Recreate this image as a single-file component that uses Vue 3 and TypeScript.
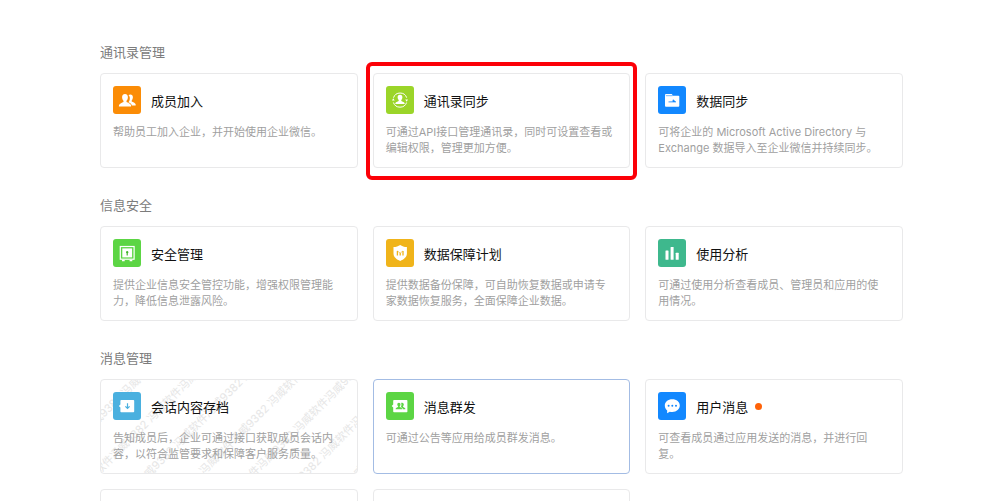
<script setup lang="ts">
type IconName = 'members' | 'contacts' | 'folder' | 'safe' | 'shield' | 'chart' | 'archive' | 'broadcast' | 'chat'

interface Card {
  title: string
  icon: IconName
  color: string
  text: string
  marked?: boolean
  active?: boolean
  dot?: boolean
  watermark?: boolean
}

interface Section {
  name: string
  cards: Card[]
  pending: number
}

const sections: Section[] = [
  {
    name: '通讯录管理',
    pending: 0,
    cards: [
      { title: '成员加入', icon: 'members', color: '#fb8c06', text: '帮助员工加入企业，并开始使用企业微信。' },
      { title: '通讯录同步', icon: 'contacts', color: '#9bd529', text: '可通过API接口管理通讯录，同时可设置查看或\n编辑权限，管理更加方便。', marked: true },
      { title: '数据同步', icon: 'folder', color: '#1288ff', text: '可将企业的 Microsoft Active Directory 与\nExchange 数据导入至企业微信并持续同步。' },
    ],
  },
  {
    name: '信息安全',
    pending: 0,
    cards: [
      { title: '安全管理', icon: 'safe', color: '#5cd544', text: '提供企业信息安全管控功能，增强权限管理能\n力，降低信息泄露风险。' },
      { title: '数据保障计划', icon: 'shield', color: '#f0b41a', text: '提供数据备份保障，可自助恢复数据或申请专\n家数据恢复服务，全面保障企业数据。' },
      { title: '使用分析', icon: 'chart', color: '#3eb88d', text: '可通过使用分析查看成员、管理员和应用的使\n用情况。' },
    ],
  },
  {
    name: '消息管理',
    pending: 2,
    cards: [
      { title: '会话内容存档', icon: 'archive', color: '#4ab0df', text: '告知成员后，企业可通过接口获取成员会话内\n容，以符合监管要求和保障客户服务质量。', watermark: true },
      { title: '消息群发', icon: 'broadcast', color: '#5cd544', text: '可通过公告等应用给成员群发消息。', active: true },
      { title: '用户消息', icon: 'chat', color: '#1288ff', text: '可查看成员通过应用发送的消息，并进行回\n复。', dot: true },
    ],
  },
]

const watermarkText = '冯威软件冯威9382 '.repeat(6)
const watermarkRows = Array.from({ length: 7 }, (_, i) => 29 + i * 37)
</script>

<template>
  <main class="page">
    <section v-for="section in sections" :key="section.name" class="section">
      <h2 class="heading">{{ section.name }}</h2>
      <div class="grid">
        <a
          v-for="card in section.cards"
          :key="card.title"
          href="#"
          class="card"
          :class="{ active: card.active }"
        >
          <svg v-if="card.watermark" class="watermark" aria-hidden="true">
            <g transform="rotate(-45)">
              <text v-for="y in watermarkRows" :key="y" x="-187" :y="y" xml:space="preserve">{{ watermarkText }}</text>
            </g>
          </svg>
          <span class="top">
            <svg class="icon" viewBox="0 0 28 28" aria-hidden="true">
              <rect width="28" height="28" rx="3" :fill="card.color" />
              <g v-if="card.icon === 'members'" fill="#fff">
                <path d="M15.5 9.2c.6-.5 1.1-.7 1.8-.7 1.7 0 2.7 1.3 2.6 3.1-.1 1.3-.6 2.3-1.2 3v1c1.400.7 3.300 1.300 3.800 2.400.3.600.2 1.400.2 1.400h-3.900c-.3-1.500-1.800-2.300-3.400-3.100.9-1.200 1.500-2.700 1.400-4.400 0-1.100-.4-2-1.300-2.700z" />
                <path d="M12 8c2 0 3 1.500 2.900 3.500-.1 1.500-.7 2.600-1.400 3.300v1.200c1.600.8 3.700 1.500 4.300 2.700.3.700.3 1.700.3 1.700H5.900s0-1 .3-1.700c.6-1.200 2.700-1.900 4.300-2.700v-1.200c-.7-.7-1.300-1.800-1.400-3.300C9 9.500 10 8 12 8z" />
              </g>
              <g v-else-if="card.icon === 'contacts'">
                <path d="M7.500 11.700a7 7 0 0 1 13.200 0M20.600 16.500a7 7 0 0 1-13.200 0" fill="none" stroke="#fff" stroke-width="1" />
                <path d="M6 14.600 7.200 12.300l1.500 2.300zM22 13.500l-1.300 2.300-1.500-2.300z" fill="#fff" />
                <path d="M14 8.800c1.700 0 2.500 1.200 2.400 2.700-.1 1.200-.5 2-1.100 2.600v1c1.300.6 2.800 1.100 3.200 1.900.2.500.2 1 .2 1H9.300s0-.5.2-1c.4-.8 1.900-1.300 3.200-1.900v-1c-.6-.6-1-1.400-1.100-2.600-.1-1.500.7-2.700 2.400-2.700z" fill="#fff" />
              </g>
              <g v-else-if="card.icon === 'folder'">
                <path d="M7 9q0-1 1-1h5.500q.7 0 .9.900l.2.800H20.500q.8 0 .8.800v9.300q0 .9-.9.900H7.900q-.9 0-.9-.9z" fill="#fff" />
                <path d="M7.800 9.700h6.700" stroke="#1288ff" stroke-width=".6" />
                <path d="M10.500 15.900h7.200l-2.700-2.100v2" fill="#1288ff" stroke="#1288ff" stroke-width=".8" />
              </g>
              <g v-else-if="card.icon === 'safe'">
                <rect x="7.300" y="7.500" width="13.800" height="12.700" fill="none" stroke="#fff" stroke-width="1.200" />
                <rect x="9.300" y="9.400" width="9.800" height="9" fill="#fff" />
                <path d="M9 20.700h2.700v1.600H9zM16.600 20.700h2.700v1.600h-2.700z" fill="#fff" />
                <path d="M14.200 11.900a1.300 1.300 0 0 1 .6 2.400v2.300h-1.200v-2.300a1.300 1.300 0 0 1 .6-2.400z" fill="#42b52d" />
              </g>
              <g v-else-if="card.icon === 'shield'">
                <path d="M14.200 5.900c1.900 1.300 4 1.900 6.700 2.200v6.400c0 3.600-2.900 5.700-6.700 7.500-3.800-1.800-6.700-3.900-6.700-7.500V8.100c2.700-.3 4.800-.9 6.700-2.200z" fill="#fff" />
                <path d="M11.400 12v4.600M14.200 14v2.600M17 12v4.600" stroke="#f0b41a" stroke-width="1.300" />
                <path d="m11.400 12 2.800 2 2.800-2" fill="none" stroke="#f0b41a" stroke-width=".6" />
              </g>
              <g v-else-if="card.icon === 'chart'" fill="#fff">
                <rect x="7.500" y="11.500" width="3" height="9.200" rx=".5" />
                <rect x="12.600" y="8" width="3" height="12.700" rx=".5" />
                <rect x="17.700" y="13.800" width="3" height="6.900" rx=".5" />
              </g>
              <g v-else-if="card.icon === 'archive'">
                <path d="M8.200 8h12.200q.8 0 .8.800v10.600q0 .8-.8.800H8.200q-.8 0-.8-.8v-4l-1.500-1.500 1.500-1.400V8.800q0-.8.8-.8z" fill="#fff" />
                <path d="M14.500 11.200v5M12.400 14.300l2.100 2.200 2.100-2.200" fill="none" stroke="#4ab0df" stroke-width="1.200" />
              </g>
              <g v-else-if="card.icon === 'broadcast'">
                <path d="M8 8h12.600q.8 0 .8.800v10.600q0 .8-.8.800H8q-.8 0-.8-.8v-4l-1.500-1.500 1.500-1.400V8.800q0-.8.8-.8z" fill="#fff" />
                <path d="M12.900 10.700c1.100 0 1.700.8 1.600 1.900 0 .8-.4 1.400-.8 1.800v.7c1 .5 2.300.8 2.500 1.900v.3H9.600V17c.2-1.100 1.500-1.400 2.500-1.900v-.7c-.4-.4-.8-1-.8-1.800-.1-1.100.5-1.900 1.600-1.900zM16.300 10.900c1 0 1.500.7 1.500 1.700 0 .8-.4 1.300-.7 1.700v.6c.8.5 2 .7 2.200 1.700v.7h-2.500c0-1.200-.8-1.900-1.900-2.400.6-1 .8-2.400.2-3.800.3-.3.700-.5 1.200-.5z" fill="#5cd544" />
              </g>
              <g v-else>
                <path d="M14.300 7.200c4.300 0 7.500 2.700 7.500 6.400 0 3.600-3.200 6.400-7.500 6.400-.9 0-1.700-.1-2.500-.3l-2.700 1.500.1-2.600c-1.500-1.200-2.400-3-2.400-5 0-3.700 3.200-6.400 7.500-6.400z" fill="#fff" />
                <g fill="#1288ff"><circle cx="10.600" cy="13.700" r="1" /><circle cx="14.300" cy="13.700" r="1" /><circle cx="18" cy="13.700" r="1" /></g>
              </g>
            </svg>
            <span class="title">{{ card.title }}</span>
            <span v-if="card.dot" class="dot"></span>
          </span>
          <span class="text">{{ card.text }}</span>
          <span v-if="card.marked" class="mark"></span>
        </a>
        <div v-for="n in section.pending" :key="n" class="card"></div>
      </div>
    </section>
  </main>
</template>

<style>
body {
  margin: 0;
  background: #fff;
}
</style>

<style scoped>
.page {
  box-sizing: border-box;
  height: 100vh;
  overflow: hidden;
  padding: 43px 97px 0 100px;
  font-family: Inter, "Noto Sans CJK SC", sans-serif;
}

.section {
  margin-bottom: 28px;
}

.heading {
  margin: 0 0 12px;
  color: #7c7c7c;
  font-size: 13px;
  font-weight: 400;
  line-height: 18px;
}

.grid {
  display: grid;
  grid-template-columns: repeat(3, 1fr);
  gap: 15px;
}

.card {
  position: relative;
  box-sizing: border-box;
  min-height: 95px;
  padding: 12px 12px 11px;
  border: 1px solid #e9e9ea;
  border-radius: 4px;
  color: inherit;
  text-decoration: none;
}

.card.active {
  border-color: #a3bce4;
}

.top {
  position: relative;
  display: flex;
  align-items: center;
  height: 28px;
}

.icon {
  width: 28px;
  height: 28px;
  margin-right: 10px;
}

.title {
  padding-top: 2px;
  color: #111;
  font-size: 13px;
  line-height: 20px;
}

.dot {
  width: 7px;
  height: 7px;
  margin-left: 7px;
  border-radius: 50%;
  background: #ff6208;
}

.text {
  position: relative;
  display: block;
  margin-top: 10px;
  color: #9f9f9f;
  font-size: 11px;
  line-height: 16px;
  white-space: pre-line;
}

.mark {
  position: absolute;
  inset: -12px -8px -13px;
  border: 4px solid #fc0007;
  border-radius: 6px;
  pointer-events: none;
}

.watermark {
  position: absolute;
  inset: 0;
  width: 100%;
  height: 100%;
  border-radius: 3px;
  overflow: hidden;
  fill: #e6e6e6;
  font-size: 11px;
}
</style>
